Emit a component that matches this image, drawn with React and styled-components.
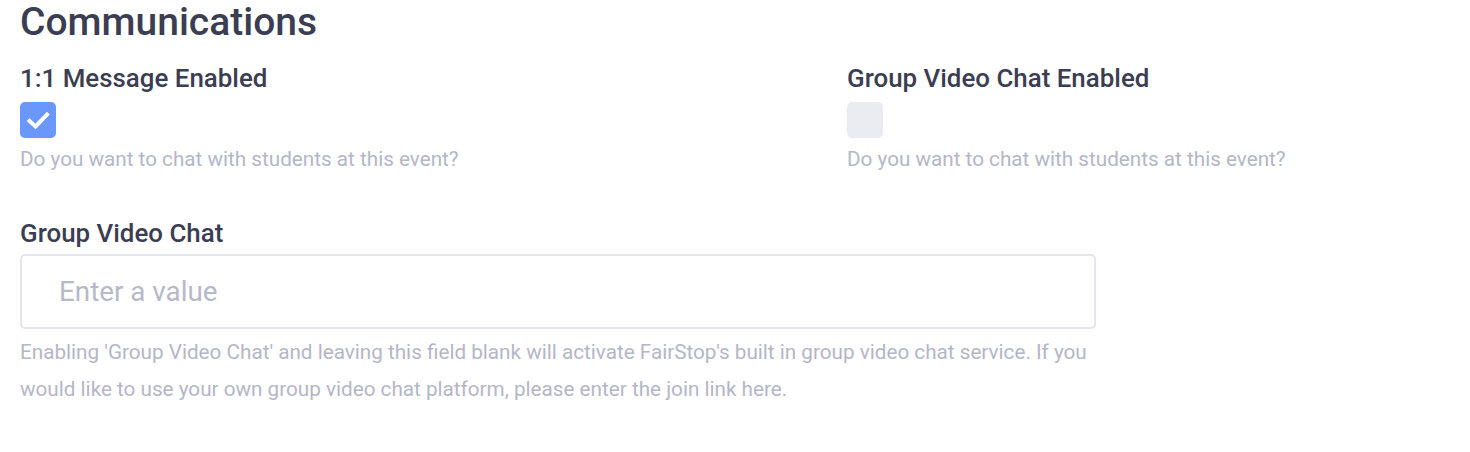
import React from "react";
import styled, { createGlobalStyle } from "styled-components";

const Global = createGlobalStyle`
  html, body { margin: 0; padding: 0; background: #ffffff; }
  body { font-family: Roboto, "Liberation Sans", Arial, sans-serif; -webkit-font-smoothing: antialiased; }
  * { box-sizing: border-box; }
`;

const Page = styled.div`
  padding: 0 20px;
  width: 1470px;
`;

const Title = styled.h2`
  margin: 0;
  font-size: 39px;
  line-height: 45px;
  font-weight: 500;
  color: #3b3e52;
`;

const Row = styled.div`
  display: grid;
  grid-template-columns: 827px 1fr;
  margin-top: 18px;
`;

const Field = styled.div`
  display: flex;
  flex-direction: column;
  align-items: flex-start;
`;

const Label = styled.label`
  display: block;
  font-size: 25.9px;
  line-height: 30px;
  font-weight: 500;
  color: #3b3e52;
`;

const Box = styled.span`
  display: flex;
  align-items: center;
  justify-content: center;
  width: 36px;
  height: 36px;
  border-radius: 5px;
  margin-top: 9px;
  background: ${(p) => (p.$checked ? "#6a97fb" : "#ebecf2")};
`;

const Help = styled.p`
  margin: ${(p) => p.$mt || "7px"} 0 0;
  font-size: 20.7px;
  line-height: ${(p) => p.$lh || "28px"};
  color: #b5b6c8;
`;

const Section = styled.div`
  margin-top: 45px;
  width: 1076px;
`;

const Input = styled.input`
  display: block;
  width: 1076px;
  height: 75px;
  margin-top: 6px;
  border: 2px solid #e3e5ef;
  border-radius: 5px;
  padding: 0 37px;
  font-family: Roboto, "Liberation Sans", Arial, sans-serif;
  font-size: 27.8px;
  color: #3b3e52;
  outline: none;
  &::placeholder { color: #b7b8c9; }
`;

const Check = () => (
  <svg width="36" height="36" viewBox="0 0 36 36">
    <path d="M9.5 19 L15.5 24.5 L27 12.5" fill="none" stroke="#fff" strokeWidth="4" strokeLinecap="square" />
  </svg>
);

const Toggle = ({ label, checked }) => (
  <Field>
    <Label>{label}</Label>
    <Box $checked={checked}>{checked && <Check />}</Box>
    <Help>Do you want to chat with students at this event?</Help>
  </Field>
);

export default function App() {
  return (
    <Page>
      <Global />
      <Title>Communications</Title>
      <Row>
        <Toggle label="1:1 Message Enabled" checked />
        <Toggle label="Group Video Chat Enabled" />
      </Row>
      <Section>
        <Label>Group Video Chat</Label>
        <Input placeholder="Enter a value" />
        <Help $mt="5px" $lh="37px">
          Enabling 'Group Video Chat' and leaving this field blank will activate FairStop's built in group video chat service. If you would like to use your own group video chat platform, please enter the join link here.
        </Help>
      </Section>
    </Page>
  );
}
